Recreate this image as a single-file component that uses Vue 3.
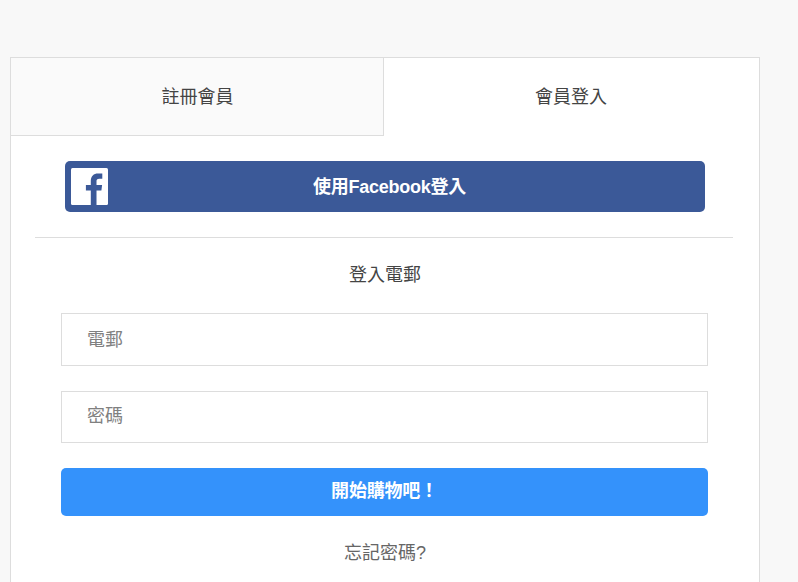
<script setup>
const tabs = [
  { label: '註冊會員', active: false },
  { label: '會員登入', active: true }
]
</script>

<template>
  <div class="page">
    <section class="card">
      <div class="tabs">
        <div v-for="tab in tabs" :key="tab.label" class="tab" :class="{ active: tab.active }">{{ tab.label }}</div>
      </div>
      <div class="fb-wrap">
        <button class="fb" type="button">
          <svg class="fb-icon" viewBox="0 0 37 37" width="37" height="37" aria-hidden="true">
            <rect width="37" height="37" rx="1.5" fill="#fff" />
            <path d="M25.5 37V22.6h4.9l.7-5.6h-5.600v-3.600c0-1.600.5-2.700 2.800-2.700h3V5.600c-.5-.1-2.300-.2-4.300-.2-4.300 0-7.200 2.600-7.200 7.400V17h-4.900v5.600h4.900V37z" fill="#3b5998" />
          </svg>
          <span>使用Facebook登入</span>
        </button>
      </div>
      <hr class="divider" />
      <h2 class="title">登入電郵</h2>
      <form class="form" @submit.prevent>
        <input class="field first" type="text" placeholder="電郵" />
        <input class="field second" type="password" placeholder="密碼" />
        <button class="submit" type="submit">開始購物吧！</button>
      </form>
      <a class="forgot">忘記密碼?</a>
    </section>
  </div>
</template>

<style scoped>
.page {
  box-sizing: border-box;
  width: 798px;
  height: 582px;
  overflow: hidden;
  padding: 57px 38px 0 10px;
  background: #f8f8f8;
  font-family: "Liberation Sans", "Noto Sans CJK TC", sans-serif;
  color: #444;
}
.card {
  box-sizing: border-box;
  width: 750px;
  height: 560px;
  background: #fff;
  border: 1px solid #ddd;
}
.tabs {
  display: flex;
  margin: -1px -1px 0 -1px;
}
.tab {
  box-sizing: border-box;
  height: 79px;
  display: flex;
  align-items: center;
  justify-content: center;
  font-size: 18px;
  padding-bottom: 4px;
}
.tab:not(.active) {
  width: 374px;
  background: #fafafa;
  border: 1px solid #ddd;
  padding-left: 1px;
}
.tab.active {
  flex: 1;
  background: #fff;
  border-top: 1px solid #ddd;
  border-right: 1px solid #ddd;
  padding-right: 1px;
}
.fb-wrap {
  padding: 25px 54px 0 54px;
}
.fb {
  position: relative;
  width: 640px;
  height: 51px;
  border: 0;
  border-radius: 5px;
  background: #3b5998;
  color: #fff;
  font: bold 18px "Liberation Sans", "Noto Sans CJK TC", sans-serif;
  letter-spacing: -0.25px;
  padding: 0 0 4px 9px;
}
.fb-icon {
  position: absolute;
  left: 6px;
  top: 7px;
}
.divider {
  margin: 25px 26px 0 24px;
  border: 0;
  border-top: 1px solid #ddd;
}
.title {
  margin: 24px 0 0;
  height: 27px;
  line-height: 27px;
  text-align: center;
  font-size: 18px;
  font-weight: 400;
}
.form {
  display: flex;
  flex-direction: column;
  padding: 24px 51px 0 50px;
}
.field {
  box-sizing: border-box;
  width: 647px;
  padding: 0 25px;
  border: 1px solid #ddd;
  background: #fff;
  outline: none;
  font: 18px "Liberation Sans", "Noto Sans CJK TC", sans-serif;
  color: #333;
}
.field::placeholder {
  color: #808080;
  opacity: 1;
}
.first {
  height: 53px;
  padding-top: 2px;
}
.second {
  height: 52px;
  margin-top: 25px;
  padding-bottom: 2px;
}
.submit {
  width: 647px;
  height: 48px;
  margin-top: 25px;
  border: 0;
  border-radius: 5px;
  background: #3492fb;
  color: #fff;
  font: bold 18px "Liberation Sans", "Noto Sans CJK TC", sans-serif;
  letter-spacing: -0.2px;
  padding: 0 0 6px;
}
.forgot {
  display: block;
  margin-top: 24px;
  height: 27px;
  line-height: 27px;
  text-align: center;
  font-size: 18px;
  color: #666;
}
</style>
